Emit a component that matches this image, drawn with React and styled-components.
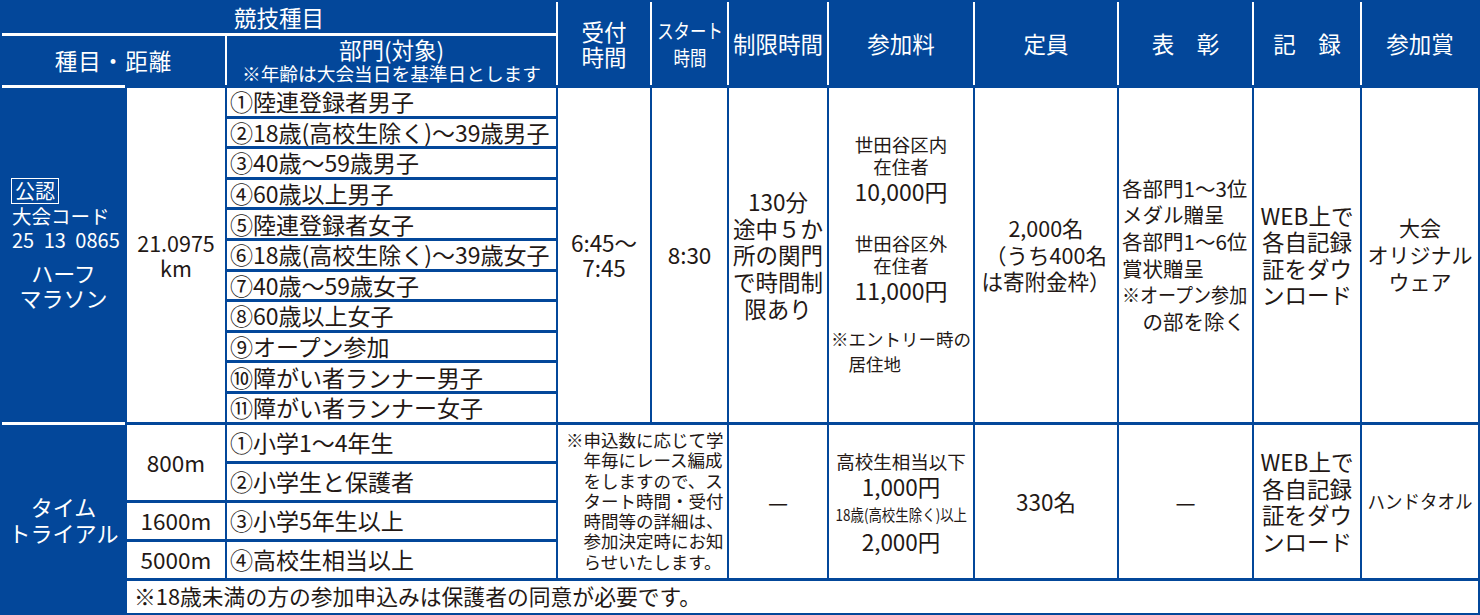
import React from 'react';
import styled, { createGlobalStyle } from 'styled-components';

const BLUE = '#03479a';
const INK = '#231815';
const WHITE_LEFT = '-2px 0 0 #fff';

const GlobalStyle = createGlobalStyle`
  html, body { margin: 0; padding: 0; background: #fff; }
  body {
    font-family: "Noto Sans CJK JP", "Noto Sans", sans-serif;
    color: ${INK};
  }
`;

// grid: 11 columns, header rows 1-2, half marathon rows 3-13, time trial 14-17, note 18
const Table = styled.div`
  display: grid;
  box-sizing: border-box;
  width: 1480px;
  padding: 2px;
  gap: 3px 2px;
  background: ${BLUE};
  grid-template-columns: 123px 98px 329px 92px 75px 98px 144px 142px 133px 106px 116px;
  grid-template-rows: 31px 49px repeat(11, 27.6px) repeat(4, 36px) 32px;
`;

const Head = styled.div`
  grid-column: ${p => p.$col};
  grid-row: ${p => p.$row || '1 / 3'};
  display: flex;
  flex-direction: column;
  align-items: center;
  justify-content: center;
  background: ${BLUE};
  color: #fff;
  font-size: ${p => p.$size || 22.5}px;
  line-height: ${p => p.$lh || '1.1'};
  letter-spacing: ${p => p.$spacing || '0'};
  text-align: center;
  white-space: nowrap;
  box-shadow: ${p => p.$lines || WHITE_LEFT};
`;

const Side = styled.div`
  grid-column: 1;
  grid-row: ${p => p.$row};
  display: flex;
  flex-direction: column;
  justify-content: center;
  align-items: center;
  box-sizing: border-box;
  padding-bottom: ${p => p.$lift || 0}px;
  background: ${BLUE};
  color: #fff;
  white-space: nowrap;
  box-shadow: ${p => p.$lines || 'none'};
`;

const Badge = styled.span`
  align-self: flex-start;
  margin-left: 9px;
  padding: 0 3px;
  border: 1.5px solid #fff;
  font-size: 20px;
  line-height: 24px;
`;

const SideText = styled.div`
  align-self: flex-start;
  margin-left: 10px;
  font-size: ${p => (p.$code ? 20 : 19.5)}px;
  line-height: 24px;
  word-spacing: ${p => (p.$code ? '5px' : '0')};
`;

const SideTitle = styled.div`
  margin-top: ${p => p.$mt || 0}px;
  font-size: 22px;
  line-height: ${p => p.$lh || '25px'};
  text-align: center;
`;

const Cell = styled.div`
  grid-column: ${p => p.$col};
  grid-row: ${p => p.$row};
  display: flex;
  flex-direction: column;
  justify-content: center;
  align-items: ${p => (p.$left ? 'flex-start' : 'center')};
  box-sizing: border-box;
  padding: ${p => p.$pad || '0'};
  background: #fff;
  font-size: ${p => p.$size || 22.5}px;
  line-height: ${p => p.$lh || '1.2'};
  text-align: ${p => (p.$left ? 'left' : 'center')};
  white-space: nowrap;
  overflow: hidden;
`;

const Division = styled.div`
  grid-column: 3;
  grid-row: ${p => p.$row};
  display: flex;
  align-items: center;
  padding-left: 3px;
  background: #fff;
  font-size: 23px;
  line-height: 1;
  white-space: nowrap;
`;

const Block = styled.div`
  font-size: ${p => (p.$size ? `${p.$size}px` : 'inherit')};
  line-height: ${p => p.$lh || 'inherit'};
  margin-top: ${p => p.$mt || 0}px;
  padding-left: ${p => (p.$indent ? '1em' : '0')};
  ${p => p.$hang && `
    text-align: left;
    padding-left: 1em;
    text-indent: -1em;
  `}
`;

const Squeeze = styled.span`
  display: inline-block;
  transform: scaleX(${p => p.$x});
  transform-origin: ${p => p.$origin || 'center'};
`;

const HALF_DIVISIONS = [
  '①陸連登録者男子',
  '②18歳(高校生除く)～39歳男子',
  '③40歳～59歳男子',
  '④60歳以上男子',
  '⑤陸連登録者女子',
  '⑥18歳(高校生除く)～39歳女子',
  '⑦40歳～59歳女子',
  '⑧60歳以上女子',
  '⑨オープン参加',
  '⑩障がい者ランナー男子',
  '⑪障がい者ランナー女子',
];

const TRIAL_DIVISIONS = ['①小学1～4年生', '②小学生と保護者', '③小学5年生以上', '④高校生相当以上'];

const Download = ({ row }) => (
  <Cell $col="10" $row={row} $lh="26.5px">
    <div>WEB上で<br />各自記録<br />証をダウ<br />ンロード</div>
  </Cell>
);

export default function App() {
  return (
    <>
      <GlobalStyle />
      <Table>
        {/* header */}
        <Head $col="1 / 4" $row="1" $lines="0 3px 0 #fff">競技種目</Head>
        <Head $col="1 / 3" $row="2" $lines="none" $spacing="1px">種目・距離</Head>
        <Head $col="3" $row="2" $lh="23px">
          <div>部門(対象)</div>
          <Block $size={18.7}>※年齢は大会当日を基準日とします</Block>
        </Head>
        <Head $col="4" $lh="24.5px"><div>受付<br />時間</div></Head>
        <Head $col="5" $size={20} $lh="27px">
          <Squeeze $x={0.82}>スタート<br />時間</Squeeze>
        </Head>
        <Head $col="6">制限時間</Head>
        <Head $col="7">参加料</Head>
        <Head $col="8">定員</Head>
        <Head $col="9">表　彰</Head>
        <Head $col="10">記　録</Head>
        <Head $col="11">参加賞</Head>

        {/* half marathon */}
        <Side $row="3 / 14" $lift={21} $lines="0 -3px 0 #fff, 0 3px 0 #fff">
          <Badge>公認</Badge>
          <SideText>大会コード</SideText>
          <SideText $code>25 13 0865</SideText>
          <SideTitle $mt={8}>ハーフ<br />マラソン</SideTitle>
        </Side>
        <Cell $col="2" $row="3 / 14" $size={21.5} $lh="25px">
          <div>21.0975<br />km</div>
        </Cell>
        {HALF_DIVISIONS.map((d, i) => (
          <Division key={d} $row={3 + i}>{d}</Division>
        ))}
        <Cell $col="4" $row="3 / 14" $lh="25px">
          <div>6:45～<br />7:45</div>
        </Cell>
        <Cell $col="5" $row="3 / 14">8:30</Cell>
        <Cell $col="6" $row="3 / 14" $lh="26.7px">
          <div>130分<br />途中５か<br />所の関門<br />で時間制<br />限あり</div>
        </Cell>
        <Cell $col="7" $row="3 / 14">
          <Block $size={18.5} $lh="22px">世田谷区内<br />在住者</Block>
          <Block $size={23} $lh="28px">10,000円</Block>
          <Block $size={18.5} $lh="22px" $mt={27}>世田谷区外<br />在住者</Block>
          <Block $size={23} $lh="28px">11,000円</Block>
          <Block $size={17.5} $lh="25px" $mt={22} $hang>※エントリー時の<br />居住地</Block>
        </Cell>
        <Cell $col="8" $row="3 / 14" $size={21.5} $lh="26.5px">
          <div>2,000名<br />（うち400名<br />は寄附金枠）</div>
        </Cell>
        <Cell $col="9" $row="3 / 14" $left $pad="0 0 0 3px" $size={20.5} $lh="26.7px">
          <div>各部門1～3位</div>
          <div>メダル贈呈</div>
          <div>各部門1～6位</div>
          <div>賞状贈呈</div>
          <div><Squeeze $x={0.88} $origin="left">※オープン参加</Squeeze></div>
          <Block $indent>の部を除く</Block>
        </Cell>
        <Download row="3 / 14" />
        <Cell $col="11" $row="3 / 14" $size={21} $lh="27px">
          <div>大会<br />オリジナル<br />ウェア</div>
        </Cell>

        {/* time trial */}
        <Side $row="14 / 19">
          <SideTitle $lh="26px">タイム<br />トライアル</SideTitle>
        </Side>
        <Cell $col="2" $row="14 / 16">800m</Cell>
        <Cell $col="2" $row="16">1600m</Cell>
        <Cell $col="2" $row="17">5000m</Cell>
        {TRIAL_DIVISIONS.map((d, i) => (
          <Division key={d} $row={14 + i}>{d}</Division>
        ))}
        <Cell $col="4 / 6" $row="14 / 18" $left $pad="0 0 0 8px" $size={17.5} $lh="20.3px">
          <Block $hang>
            ※申込数に応じて学<br />年毎にレース編成<br />をしますので、ス<br />タート時間・受付<br />
            時間等の詳細は、<br />参加決定時にお知<br />らせいたします。
          </Block>
        </Cell>
        <Cell $col="6" $row="14 / 18">—</Cell>
        <Cell $col="7" $row="14 / 18">
          <Block $size={18.5} $lh="25px">高校生相当以下</Block>
          <Block $size={22.5} $lh="25px">1,000円</Block>
          <Block $size={16} $lh="30px">
            <Squeeze $x={0.84}>18歳(高校生除く)以上</Squeeze>
          </Block>
          <Block $size={22.5} $lh="25px">2,000円</Block>
        </Cell>
        <Cell $col="8" $row="14 / 18">330名</Cell>
        <Cell $col="9" $row="14 / 18">—</Cell>
        <Download row="14 / 18" />
        <Cell $col="11" $row="14 / 18" $size={19}>
          <Squeeze $x={0.92}>ハンドタオル</Squeeze>
        </Cell>

        {/* footnote */}
        <Cell $col="2 / 12" $row="18" $left $pad="0 0 0 7px" $size={21.8}>
          ※18歳未満の方の参加申込みは保護者の同意が必要です。
        </Cell>
      </Table>
    </>
  );
}
